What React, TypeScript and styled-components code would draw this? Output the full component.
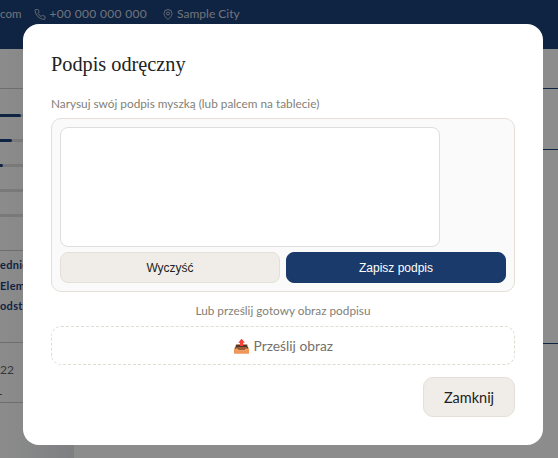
import React from "react";
import styled, { createGlobalStyle } from "styled-components";

const Global = createGlobalStyle`
  html, body { margin: 0; padding: 0; width: 558px; height: 458px; overflow: hidden; background: #fff; }
  * { box-sizing: border-box; }
`;

const Page = styled.div`
  width: 558px;
  height: 458px;
  display: flex;
  flex-direction: column;
  font-family: "Lato", "Liberation Sans", sans-serif;
  background: #fff;
`;

const TopBar = styled.div`
  height: 49px;
  background: #1d4079;
  color: rgba(255, 255, 255, 0.78);
  padding: 7px 0 0 0;
  display: flex;
  align-items: flex-start;
  gap: 15px;
  font-size: 12px;
  line-height: 14px;
  overflow: hidden;
  flex-shrink: 0;
`;

const TopItem = styled.span<{ $spacing?: number }>`
  display: inline-flex;
  align-items: center;
  gap: 3px;
  white-space: nowrap;
  letter-spacing: ${(p) => p.$spacing ?? 0}px;
  svg { display: block; }
`;

const Cropped = styled(TopItem)`
  font-size: 11.5px;
  margin-right: -2px;
`;

const Body = styled.div`
  flex: 1;
  display: flex;
  min-height: 0;
`;

const Sidebar = styled.div`
  width: 74px;
  flex-shrink: 0;
  padding-top: 39px;
  background: linear-gradient(90deg, #ffffff, #e6e8ec);
  display: flex;
  flex-direction: column;
`;

const Rule = styled.div<{ $top?: number; $navy?: boolean }>`
  height: 1px;
  margin-top: ${(p) => p.$top ?? 0}px;
  background: ${(p) => (p.$navy ? "#1d4079" : "#c4c7cc")};
`;

const Bar = styled.div<{ $top: number }>`
  height: 3px;
  margin-top: ${(p) => p.$top}px;
  background: #dcdcdc;
  overflow: hidden;
`;

const BarFill = styled.div<{ $w: number }>`
  width: ${(p) => p.$w}px;
  height: 100%;
  border-radius: 0 2px 2px 0;
  background: #1d4079;
`;

const Menu = styled.div`
  padding: 4px 0 1px;
  font-size: 11px;
  font-weight: 700;
  line-height: 20.5px;
  letter-spacing: 0.3px;
  color: #1d4079;
  white-space: nowrap;
  overflow: hidden;
`;

const Year = styled.div`
  margin-top: 20px;
  font-size: 12px;
  line-height: 14px;
  color: #666;
`;

const Dash = styled.div`
  margin-top: 17px;
  width: 2px;
  height: 1px;
  background: #666;
`;

const Main = styled.div`
  flex: 1;
  padding-top: 39px;
`;

const Overlay = styled.div`
  position: fixed;
  inset: 0;
  font-family: "Lato", "Liberation Sans", sans-serif;
  background: rgba(0, 0, 0, 0.45);
  display: flex;
  align-items: flex-start;
  padding: 24px 0 0 23px;
`;

const Modal = styled.div`
  width: 520px;
  height: 421px;
  background: #fff;
  border-radius: 16px;
  padding: 28px;
  display: flex;
  flex-direction: column;
`;

const Title = styled.h2`
  margin: 0 0 21px;
  font-family: "Liberation Serif", serif;
  font-weight: 400;
  font-size: 20.3px;
  line-height: 24px;
  color: #222;
`;

const Hint = styled.p`
  margin: 0 0 7px;
  font-size: 11.8px;
  line-height: 14px;
  color: #837f77;
`;

const SignBox = styled.div`
  height: 174px;
  background: #fafafa;
  border: 1px solid #e4dfd8;
  border-radius: 10px;
  padding: 8px;
  display: flex;
  flex-direction: column;
  gap: 5px;
`;

const Canvas = styled.div`
  width: 380px;
  height: 120px;
  background: #fff;
  border: 1px solid #dedede;
  border-radius: 8px;
`;

const Buttons = styled.div`
  display: flex;
  gap: 6px;
`;

const Btn = styled.button<{ $primary?: boolean }>`
  flex: 1;
  height: 31px;
  border-radius: 8px;
  font-family: "Liberation Sans", sans-serif;
  font-size: 12px;
  padding: 0;
  border: 1px solid ${(p) => (p.$primary ? "#1a3a6b" : "#e4dfd8")};
  background: ${(p) => (p.$primary ? "#1a3a6b" : "#f0ede8")};
  color: ${(p) => (p.$primary ? "#fff" : "#222")};
`;

const Or = styled.p`
  margin: 12px 0 8px;
  text-align: center;
  font-size: 11.8px;
  line-height: 14px;
  color: #837f77;
`;

const Upload = styled.div`
  height: 39px;
  padding-bottom: 1px;
  border: 1px dashed #e0dcd4;
  border-radius: 10px;
  display: flex;
  align-items: center;
  justify-content: center;
  font-size: 13.8px;
  color: #75716a;
`;

const Footer = styled.div`
  display: flex;
  justify-content: flex-end;
  margin-top: 12px;
`;

const Close = styled.button`
  width: 92px;
  height: 40px;
  background: #f0ede8;
  border: 1px solid #e4dfd8;
  border-radius: 10px;
  font-family: "Lato", sans-serif;
  font-size: 14.5px;
  color: #222;
  padding: 0;
`;

const EdgeText = styled.div`
  margin: 15px 0 0 13px;
  font-size: 8px;
  line-height: 8px;
  color: #666;
`;

export default function App() {
  return (
    <>
      <Global />
      <Page>
        <TopBar>
          <Cropped>com</Cropped>
          <TopItem $spacing={0.33}>
            <svg width="12" height="13" viewBox="0 0 24 24" fill="none" stroke="currentColor" strokeWidth="1.7">
              <path d="M22 16.9v3a2 2 0 0 1-2.2 2A19.8 19.8 0 0 1 2.1 4.2 2 2 0 0 1 4.1 2h3a2 2 0 0 1 2 1.7c.1 1 .4 1.9.7 2.8a2 2 0 0 1-.5 2.1L8.1 9.9a16 16 0 0 0 6 6l1.3-1.3a2 2 0 0 1 2.1-.4c.9.3 1.8.6 2.8.7a2 2 0 0 1 1.7 2Z" />
            </svg>
            +00 000 000 000
          </TopItem>
          <TopItem>
            <svg width="12" height="13" viewBox="0 0 24 24" fill="none" stroke="currentColor" strokeWidth="1.7">
              <path d="M20 10c0 6-8 12-8 12s-8-6-8-12a8 8 0 0 1 16 0Z" />
              <circle cx="12" cy="10" r="3" />
            </svg>
            Sample City
          </TopItem>
        </TopBar>
        <Body>
          <Sidebar>
            <Rule />
            <Bar $top={25}><BarFill $w={21} /></Bar>
            <Bar $top={22}><BarFill $w={12} /></Bar>
            <Bar $top={22}><BarFill $w={3} /></Bar>
            <Bar $top={22} />
            <Bar $top={22} />
            <Rule $top={33} />
            <Menu>
              <div>ednic</div>
              <div>Eleme</div>
              <div>odsta</div>
            </Menu>
            <Rule $top={24} />
            <Year>22</Year>
            <Dash />
            <Rule $top={7} />
          </Sidebar>
          <Main>
            <Rule $navy />
            <Rule $navy $top={60} />
            <EdgeText>:</EdgeText>
            <Rule $navy $top={170} />
          </Main>
        </Body>
      </Page>
      <Overlay>
        <Modal>
          <Title>Podpis odręczny</Title>
          <Hint>Narysuj swój podpis myszką (lub palcem na tablecie)</Hint>
          <SignBox>
            <Canvas />
            <Buttons>
              <Btn>Wyczyść</Btn>
              <Btn $primary>Zapisz podpis</Btn>
            </Buttons>
          </SignBox>
          <Or>Lub prześlij gotowy obraz podpisu</Or>
          <Upload>📤 Prześlij obraz</Upload>
          <Footer>
            <Close>Zamknij</Close>
          </Footer>
        </Modal>
      </Overlay>
    </>
  );
}
